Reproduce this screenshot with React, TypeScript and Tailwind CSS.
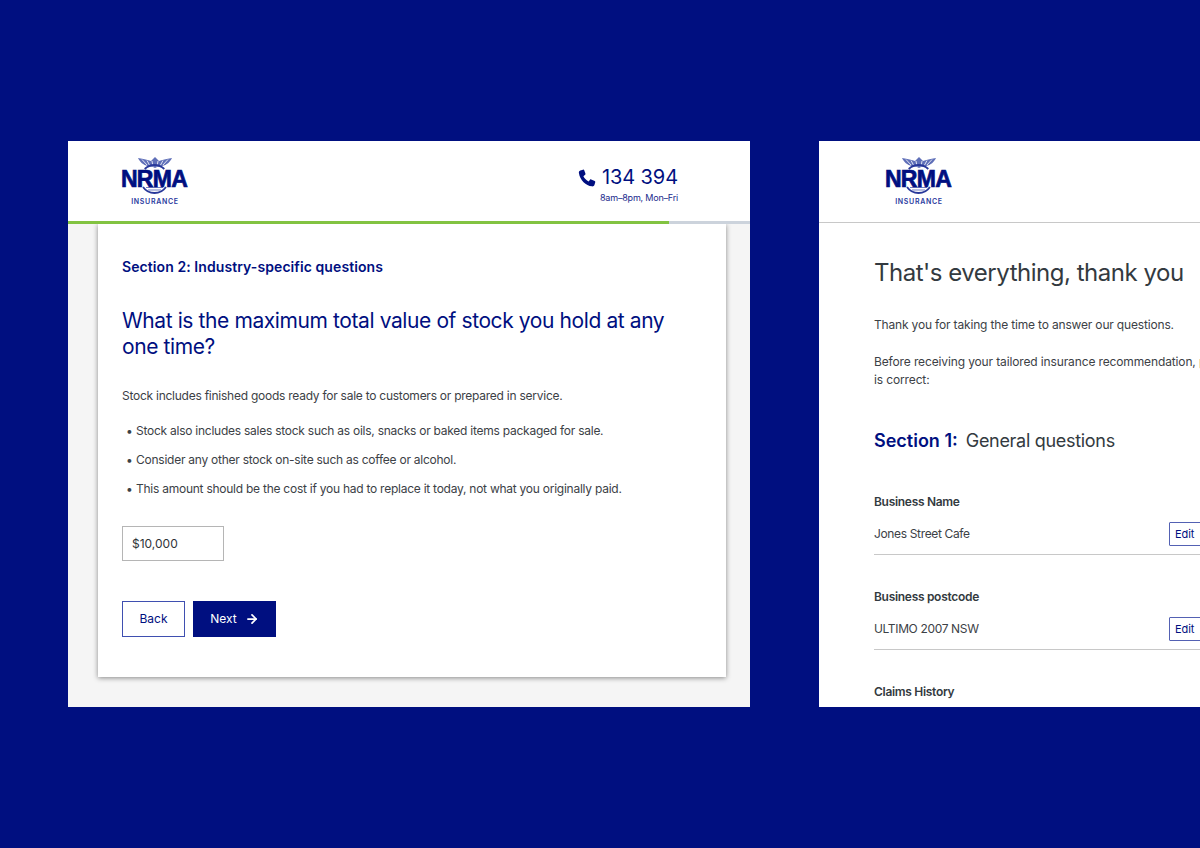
import { ArrowRight } from 'lucide-react';

const NAVY = 'text-[#000f80]';

function Logo() {
  return (
    <div className="relative h-[50px] w-[70px]">
      <svg className="absolute left-0 top-0" width="70" height="50" viewBox="0 0 70 50" fill="none">
        {/* crown */}
        <path d="M18 2 C24 3 28 4 31 5 L35 1 L39 5 C42 4 46 3 52 2 C50 6 47 9 42 10 C39 10.500 37 11 35 12 C33 11 31 10.500 28 10 C23 9 20 6 18 2 Z" fill="#5f6fb8" />
        <path d="M22 3.500 L27 9 M27 4.500 L30 10 M32 5 L33 10.500 M38 5 L37 10.500 M43 4.500 L40 10 M48 3.500 L43 9" stroke="#fff" strokeWidth="0.8" />
        {/* ring, broken where the letters sit */}
        <path d="M24.700 13 A14 14 0 0 1 44.300 13" stroke="#28389a" strokeWidth="1.800" />
        <path d="M23 31 A14 14 0 0 0 46 31" stroke="#28389a" strokeWidth="1.800" />
        <path d="M26 31.500 H43 M28 34 H41" stroke="#6f7dc2" strokeWidth="1" />
      </svg>
      <div
        className={`absolute left-[-1px] top-[10px] w-[70px] text-center text-[23px] font-bold leading-[26px] tracking-[-0.7px] ${NAVY} [font-family:'Liberation_Sans',sans-serif] [-webkit-text-stroke:0.7px_#000f80]`}
      >
        NRMA
      </div>
      <div className="absolute left-0 top-[41px] w-[70px] text-center text-[7px] font-semibold leading-[9px] tracking-[0.7px] text-[#2a3a9e]">
        INSURANCE
      </div>
    </div>
  );
}

function AnswerRow({ label, value }: { label: string; value: string }) {
  return (
    <div className="h-[95px]">
      <div className="pt-[1px] text-[12px] font-semibold leading-[16px] tracking-[-0.3px] text-[#333a40]">{label}</div>
      <div className="mt-[12px] flex h-[33px] items-start justify-between border-b border-[#c8c8c8]">
        <span className="mt-[4px] text-[12px] leading-[16px] tracking-[-0.35px] text-[#3c4146]">{value}</span>
        <span className={`h-[24px] w-[32px] rounded-[1px] border border-[#5361b3] pl-[5px] text-[11px] leading-[22px] tracking-[-0.1px] ${NAVY}`}>
          Edit
        </span>
      </div>
    </div>
  );
}

export default function App() {
  return (
    <div className="h-[848px] w-[1200px] overflow-hidden bg-[#000f80] pl-[68px] pt-[141px] font-['Inter',sans-serif]">
      <div className="flex h-[566px] w-[1200px] gap-[69px]">
        {/* question window */}
        <div className="flex h-full w-[682px] shrink-0 flex-col bg-[#f5f5f5]">
          <div className="relative flex h-[83px] shrink-0 items-start justify-between bg-white pl-[52px] pr-[72px] pt-[15px]">
            <Logo />
            <div className="flex flex-col items-end pt-[9px]">
              <div className={`flex items-center gap-[6px] text-[20px] leading-[24px] tracking-[-0.1px] ${NAVY}`}>
                <svg width="18" height="19" viewBox="0 0 24 24" fill="#000f80">
                  <path d="M6.6 1.5 3 2.600C1.500 3.100 1 4.400 1.200 6c.7 4.900 3 9 6.200 12.200 3.200 3 7 5 11.200 5.600 1.600.2 2.900-.5 3.400-2l1-3.400c.2-.7-.1-1.300-.7-1.600l-4.700-2.300c-.6-.3-1.200-.1-1.600.4l-1.800 2.300c-2.900-1.400-5.400-3.900-7-7l2.300-1.800c.5-.4.7-1.100.4-1.700L8.300 2.200c-.3-.6-1-.9-1.700-.7Z" />
                </svg>
                134 394
              </div>
              <div className="mt-[3px] text-[9px] leading-[12px] tracking-[-0.2px] text-[#1a2a8c]">8am–8pm, Mon–Fri</div>
            </div>
            <div className="absolute bottom-0 left-0 h-[3px] w-full bg-[#ccd3dc]">
              <div className="h-full w-[601px] bg-[#82c341]" />
            </div>
          </div>

          <div className="ml-[30px] mr-[24px] h-[453px] bg-white pl-[24px] pr-[40px] pt-[33px] shadow-[0_1px_5px_rgba(0,0,0,0.45)]">
            <div className={`text-[14px] font-semibold leading-[20px] tracking-[0.08px] ${NAVY}`}>Section 2: Industry-specific questions</div>
            <h1 className={`mt-[31px] text-[21px] font-normal leading-[26px] tracking-[-0.4px] ${NAVY}`}>
              What is the maximum total value of stock you hold at any one time?
            </h1>
            <p className="mt-[28px] text-[12px] leading-[16px] tracking-[-0.25px] text-[#3c4146]">
              Stock includes finished goods ready for sale to customers or prepared in service.
            </p>
            <ul className="mt-[19px] flex flex-col gap-[13px] text-[12px] leading-[16px] tracking-[-0.25px] text-[#3c4146]">
              <li className="flex"><span className="w-[14px] shrink-0 pl-[4px]">•</span>Stock also includes sales stock such as oils, snacks or baked items packaged for sale.</li>
              <li className="flex"><span className="w-[14px] shrink-0 pl-[4px]">•</span>Consider any other stock on-site such as coffee or alcohol.</li>
              <li className="flex"><span className="w-[14px] shrink-0 pl-[4px]">•</span>This amount should be the cost if you had to replace it today, not what you originally paid.</li>
            </ul>
            <div className="mt-[29px] h-[35px] w-[102px] border border-[#b5b5b5] pl-[9px] text-[12px] leading-[33px] text-[#2f3438]">
              $10,000
            </div>
            <div className="mt-[40px] flex gap-[8px]">
              <div className={`flex h-[36px] w-[63px] items-center justify-center border border-[#3f4fb0] text-[12px] ${NAVY}`}>Back</div>
              <div className="flex h-[36px] w-[83px] items-center justify-center gap-[8px] bg-[#000f80] text-[12px] text-white">
                Next
                <ArrowRight size={14} strokeWidth={3} />
              </div>
            </div>
          </div>
        </div>

        {/* summary window */}
        <div className="h-full w-[400px] shrink-0 overflow-hidden bg-white">
          <div className="h-[82px] border-b border-[#c8c8c8] pl-[65px] pt-[15px]">
            <Logo />
          </div>
          <div className="pl-[55px]">
            <h2 className="mt-[33px] whitespace-nowrap text-[24px] font-normal leading-[34px] tracking-[-0.48px] text-[#333a40]">That's everything, thank you</h2>
            <p className="mt-[27px] whitespace-nowrap text-[12px] leading-[16px] tracking-[-0.17px] text-[#3c4146]">
              Thank you for taking the time to answer our questions.
            </p>
            <p className="mt-[20px] w-[340px] text-[12px] leading-[18px] tracking-[-0.13px] text-[#3c4146]">
              <span className="whitespace-nowrap">Before receiving your tailored insurance recommendation, please</span>
              <br />
              is correct:
            </p>
            <div className="mt-[40px] flex gap-[8px] text-[18px] leading-[24px]">
              <span className={`font-semibold ${NAVY}`}>Section 1:</span>
              <span className="tracking-[-0.3px] text-[#333a40]">General questions</span>
            </div>
            <div className="mt-[40px] w-[327px]">
              <AnswerRow label="Business Name" value="Jones Street Cafe" />
              <AnswerRow label="Business postcode" value="ULTIMO 2007 NSW" />
              <div className="pt-[1px] text-[12px] font-semibold leading-[16px] tracking-[-0.3px] text-[#333a40]">Claims History</div>
            </div>
          </div>
        </div>
      </div>
    </div>
  );
}
